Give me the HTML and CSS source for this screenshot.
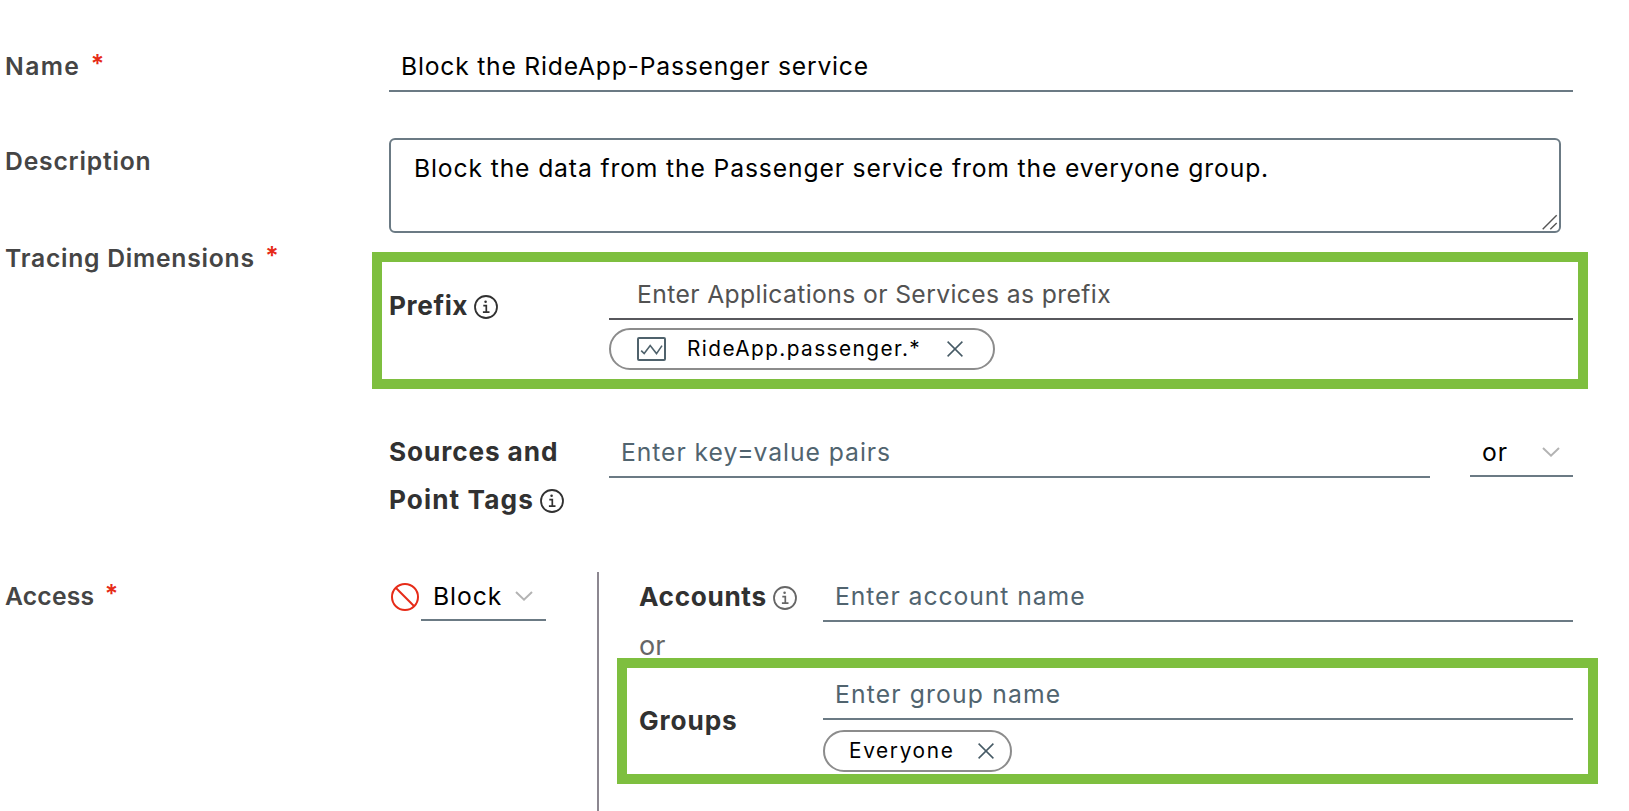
FILE: index.html
```
<!DOCTYPE html>
<html lang="en">
<head>
<meta charset="utf-8">
<title>Traces security policy</title>
<link rel="stylesheet" href="styles.css">
</head>
<body>
<svg class="defs" width="0" height="0">
  <symbol id="info" viewBox="0 0 24 24">
    <circle cx="12" cy="12" r="11" fill="none" stroke="currentColor" stroke-width="1.8"/>
    <circle cx="11.6" cy="6.8" r="1.3" fill="currentColor"/>
    <path d="M9.3 10.6h3V17M8.9 17.2h6.6" fill="none" stroke="currentColor" stroke-width="1.7"/>
  </symbol>
  <symbol id="close" viewBox="0 0 16 16">
    <path d="M.6.6l14.8 14.8M15.4.6L.6 15.4" fill="none" stroke="currentColor" stroke-width="1.5"/>
  </symbol>
  <symbol id="chevron" viewBox="0 0 18 10">
    <path d="M1 1l8 7.6L17 1" fill="none" stroke="currentColor" stroke-width="2"/>
  </symbol>
</svg>
<main class="form">
  <section class="row row-name">
    <div class="label"><span class="t-name">Name</span><span class="req">*</span></div>
    <div class="field value t-title">Block the RideApp-Passenger service</div>
  </section>

  <section class="row row-description">
    <div class="label"><span class="t-description">Description</span></div>
    <div class="textarea">Block the data from the Passenger service from the everyone group.
      <svg class="grip" width="16" height="16" viewBox="0 0 16 16"><path d="M.7 15.3L14.7 1.3M8.3 15.3l6.4-6.4" fill="none" stroke="#555" stroke-width="1.4"/></svg>
    </div>
  </section>

  <section class="row row-tracing">
    <div class="label"><span class="t-tracing">Tracing Dimensions</span><span class="req">*</span></div>
    <div class="dimensions">
      <div class="prefix">
        <div class="sublabel prefix-label"><span class="t-prefix">Prefix</span><svg class="info"><use href="#info"/></svg></div>
        <div>
          <div class="field field-prefix">Enter Applications or Services as prefix</div>
          <div class="chip chip-prefix">
            <svg class="chart" width="29" height="24" viewBox="0 0 29 24"><rect x="1" y="1" width="27" height="22" rx="1" fill="none" stroke="#4f626c" stroke-width="2"/><path d="M4.2 13.6l3 3 6-8 6.3 8L25 8.6" fill="none" stroke="#4f626c" stroke-width="1.6"/></svg>
            <span class="t-chip1">RideApp.passenger.*</span>
            <svg class="close"><use href="#close"/></svg>
          </div>
        </div>
      </div>
      <div class="sources">
        <div class="sublabel"><span class="t-sources">Sources and</span><br><span class="t-point">Point Tags</span><svg class="info"><use href="#info"/></svg></div>
        <div class="field placeholder">Enter key=value pairs</div>
        <div class="field value select select-or"><span>or</span><svg class="chevron"><use href="#chevron"/></svg></div>
      </div>
    </div>
  </section>

  <section class="row row-access">
    <div class="label"><span class="t-access">Access</span><span class="req">*</span></div>
    <div class="access">
      <div class="mode">
        <svg class="ban" width="28" height="28" viewBox="0 0 28 28"><circle cx="14" cy="14" r="13" fill="none" stroke="#e62b18" stroke-width="2"/><path d="M5 5l18.2 18.2" stroke="#e62b18" stroke-width="2"/></svg>
        <div class="field value select select-mode"><span>Block</span><svg class="chevron"><use href="#chevron"/></svg></div>
      </div>
      <div class="targets">
        <div class="target">
          <div class="sublabel accounts-label"><span class="t-accounts">Accounts</span><svg class="info soft"><use href="#info"/></svg></div>
          <div class="field placeholder">Enter account name</div>
        </div>
        <div class="or">or</div>
        <div class="target">
          <div class="sublabel groups-label"><span class="t-groups">Groups</span></div>
          <div>
            <div class="field placeholder t-group">Enter group name</div>
            <div class="chip chip-group"><span class="t-chip2">Everyone</span><svg class="close"><use href="#close"/></svg></div>
          </div>
        </div>
      </div>
    </div>
  </section>
  <div class="highlight highlight-prefix"></div>
  <div class="highlight highlight-groups"></div>
</main>
</body>
</html>
```
FILE: styles.css
```
* { box-sizing: border-box; }

body {
  margin: 0;
  background: #fff;
  color: #000;
  font-family: Inter, "Liberation Sans", sans-serif;
  font-size: 24.7px;
}

.defs { position: absolute; }

.form {
  position: relative;
  width: 1629px;
  height: 811px;
  padding: 42px 56px 0 5px;
  overflow: hidden;
}

.row {
  display: grid;
  grid-template-columns: 384px 1184px;
  align-items: start;
}

.row-name { height: 96px; }
.row-description { height: 95px; }
.row-tracing { height: 339px; }

.label {
  color: #454545;
  font-weight: 600;
  line-height: 48px;
  white-space: nowrap;
}
.row-description .label { line-height: 46px; }
.row-tracing .label { line-height: 50px; }

.req {
  position: relative;
  top: -2px;
  margin-left: 10.5px;
  color: #e62b18;
  font-size: 25px;
  line-height: 1;
}

.t-name { letter-spacing: 1.4px; }
.t-description { letter-spacing: 0.8px; }
.t-tracing { letter-spacing: 0.75px; }
.t-access { letter-spacing: 0.2px; }
.t-prefix { letter-spacing: 0.6px; }
.t-sources { letter-spacing: 0.9px; }
.t-point { letter-spacing: 1.1px; }
.t-accounts { letter-spacing: 0.65px; }
.t-groups { letter-spacing: 0.9px; }
.t-chip1 { letter-spacing: 1.42px; }
.t-chip2 { letter-spacing: 1.65px; }

.field {
  height: 50px;
  padding-left: 12px;
  border-bottom: 2px solid #6b7a84;
  line-height: 48px;
  letter-spacing: 0.95px;
  white-space: nowrap;
}
.t-title { letter-spacing: 0.78px; }
.placeholder { color: #51646f; }
.t-group { letter-spacing: 1.15px; }

.field-prefix {
  padding-left: 28px;
  border-color: #57575c;
  color: #525252;
  letter-spacing: 0.38px;
}

.textarea {
  position: relative;
  width: 1172px;
  height: 95px;
  padding: 10px 23px;
  border: 2px solid #6b7a84;
  border-radius: 6px;
  line-height: 36px;
  letter-spacing: 0.86px;
}
.grip { position: absolute; right: 1px; bottom: 1px; }

.sublabel {
  color: #313131;
  font-size: 26.2px;
  font-weight: 700;
  line-height: 48px;
  white-space: nowrap;
}

.info {
  width: 24px;
  height: 24px;
  margin-left: 6px;
  vertical-align: -4px;
}
.soft { color: #666; }

.dimensions { padding-top: 37px; }

.prefix {
  display: grid;
  grid-template-columns: 220px 964px;
  height: 157px;
}
.prefix-label { padding-top: 12px; }

.sources {
  display: grid;
  grid-template-columns: 220px 821px 143px;
  padding-top: 1px;
}
.select-or { width: 103px; margin-left: 40px; }

.select {
  display: flex;
  justify-content: space-between;
  align-items: center;
  height: 49px;
  padding-right: 13px;
}
.chevron { width: 18px; height: 10px; color: #b3b3b3; }

.chip {
  display: flex;
  align-items: center;
  height: 42px;
  border: 2px solid #8c8c8c;
  border-radius: 21px;
  font-size: 20.8px;
  line-height: 38px;
}
.chip-prefix { width: 386px; margin-top: 8px; padding: 0 30px 0 26px; }
.chip-group { width: 189px; margin-top: 10px; padding: 0 16px 0 24px; }
.chart { margin-right: 21px; }
.close { width: 16px; height: 16px; margin-left: auto; color: #465a65; }

.access {
  display: grid;
  grid-template-columns: 208px 976px;
  height: 239px;
}
.mode { display: flex; padding-left: 2px; }
.ban { margin: 11px 2px 0 0; }
.select-mode { width: 125px; }

.targets {
  height: 239px;
  padding-left: 40px;
  border-left: 2px solid #8c8790;
}
.target {
  display: grid;
  grid-template-columns: 184px 750px;
}
.or {
  height: 48px;
  color: #666;
  font-size: 27px;
  line-height: 48px;
}
.accounts-label { padding-top: 1px; height: 50px; }
.groups-label { padding-top: 27px; }

.highlight {
  position: absolute;
  border: 10px solid #7ebf3f;
}
.highlight-prefix { left: 372px; top: 252px; width: 1216px; height: 137px; }
.highlight-groups { left: 617px; top: 658px; width: 981px; height: 126px; }
```
